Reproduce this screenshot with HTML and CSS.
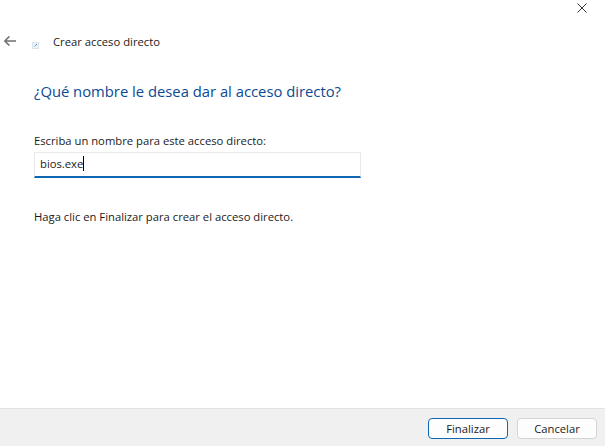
FILE: index.html
```html
<!DOCTYPE html>
<html lang="es">
<head>
<meta charset="utf-8">
<title>Crear acceso directo</title>
<link rel="stylesheet" href="styles.css">
</head>
<body>
<div class="window">
  <div class="titlebar">
    <svg class="close" width="10" height="10" viewBox="0 0 10 10"><path d="M0.5 0.5 9.5 9.5M9.5 0.5 0.5 9.5" stroke="#333" stroke-width="1" fill="none"/></svg>
  </div>
  <div class="nav">
    <svg class="back" width="12" height="10" viewBox="0 0 12 10"><path d="M5.4.4.9 5l4.5 4.6M.9 5H12" stroke="#707070" stroke-width="1.5" fill="none"/></svg>
    <svg class="wizard-icon" width="7" height="7" viewBox="0 0 7 7"><rect x=".5" y=".5" width="6" height="6" fill="#f0f4f9" stroke="#dde3ea"/><path d="M2.5 4.5 4.5 2.5" stroke="#6fa3d6" stroke-width="1" fill="none"/><path d="M3.5 2H5v1.5z" fill="#3d82c8"/></svg>
    <span class="nav-title">Crear acceso directo</span>
  </div>
  <main class="content">
    <h1 class="heading">¿Qué nombre le desea dar al acceso directo?</h1>
    <label class="field-label" for="name">Escriba un nombre para este acceso directo:</label>
    <div class="input"><span class="input-text">bios.exe</span><span class="caret"></span></div>
    <p class="hint">Haga clic en Finalizar para crear el acceso directo.</p>
  </main>
  <footer class="footer">
    <button class="btn btn-primary">Finalizar</button>
    <button class="btn">Cancelar</button>
  </footer>
</div>
</body>
</html>
```
FILE: styles.css
```css
html, body {
  margin: 0;
  padding: 0;
  background: #fff;
}
.window {
  width: 605px;
  height: 446px;
  display: flex;
  flex-direction: column;
  font-family: "Open Sans", "Noto Sans", sans-serif;
  font-size: 11.25px;
  color: #1a1a1a;
  overflow: hidden;
}
.titlebar {
  height: 32px;
  display: flex;
  justify-content: flex-end;
  align-items: flex-start;
  padding: 3px 18px 0 0;
  box-sizing: border-box;
}
.nav {
  height: 20px;
  display: flex;
  align-items: center;
  padding-left: 4px;
}
.back { margin-right: 16px; margin-bottom: 2px; }
.wizard-icon { margin-top: 6px; margin-right: 14px; }
.nav-title { line-height: 20px; }
.content {
  flex: 1;
  padding: 0 0 0 34px;
}
.heading {
  margin: 28px 0 0;
  font-size: 14.8px;
  line-height: 22px;
  font-weight: 400;
  color: #0a4a93;
}
.field-label {
  display: block;
  margin-top: 31px;
  line-height: 16px;
}
.input {
  width: 327px;
  height: 26px;
  margin-top: 3px;
  box-sizing: border-box;
  border: 1px solid #e8ebee;
  border-bottom: 2px solid #0f67b1;
  padding: 0 0 2px 5px;
  display: flex;
  align-items: center;
}
.input-text { line-height: 20px; }
.caret {
  width: 1px;
  height: 15px;
  background: #000;
}
.hint {
  margin: 31px 0 0;
  line-height: 16px;
}
.footer {
  height: 38px;
  box-sizing: border-box;
  background: #f0f0f0;
  border-top: 1px solid #e2e2e2;
  display: flex;
  justify-content: flex-end;
  align-items: flex-start;
  gap: 9px;
  padding: 9px 8px 0 0;
}
.btn {
  width: 80px;
  height: 21px;
  padding: 0;
  background: #fdfdfd;
  border: 1px solid #d4d4d4;
  border-radius: 4px;
  font: inherit;
  color: #1a1a1a;
}
.btn-primary {
  border: 1px solid #0f67b1;
}
```
